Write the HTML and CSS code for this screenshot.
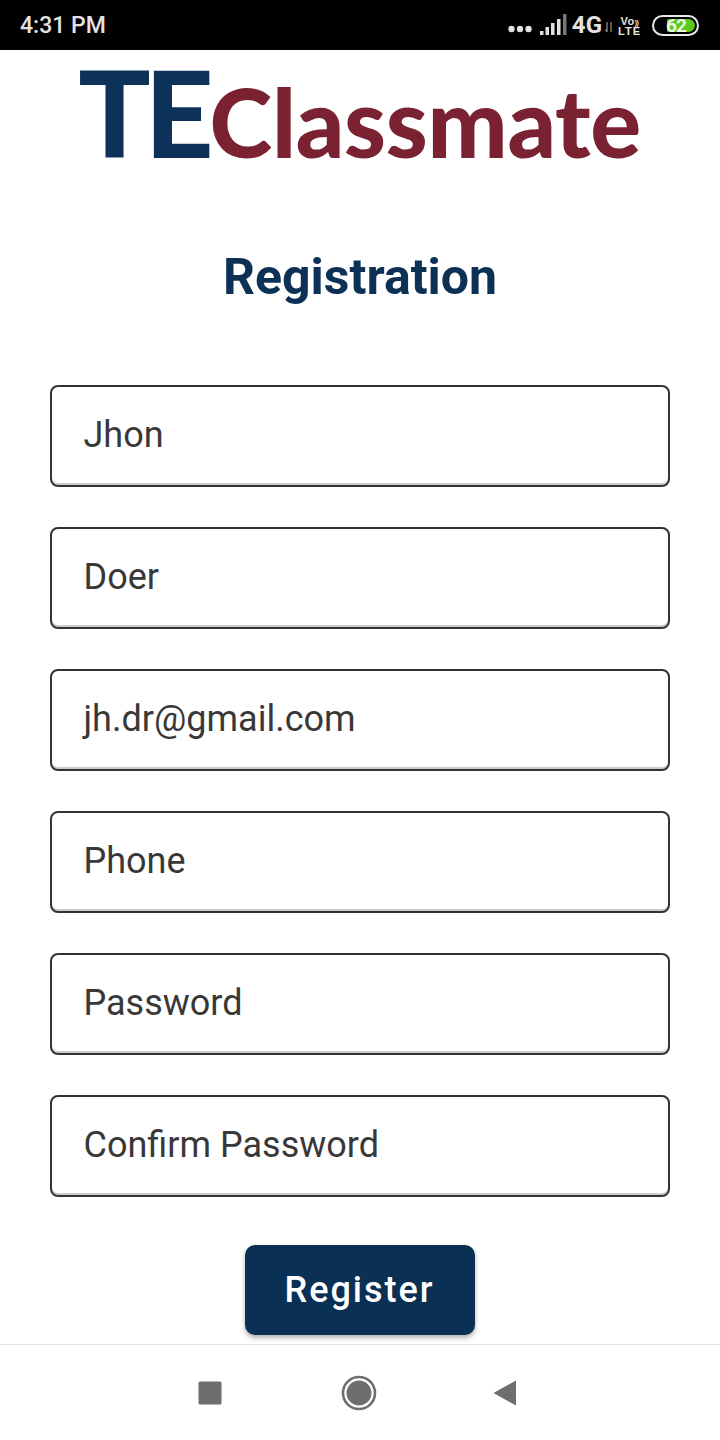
FILE: index.html
```html
<!DOCTYPE html>
<html lang="en">
<head>
<meta charset="utf-8">
<title>Registration</title>
<link rel="stylesheet" href="styles.css">
</head>
<body>
<div class="page">
  <header class="status">
    <span class="time">4:31 PM</span>
    <div class="status-icons">
      <svg class="dots" width="24" height="8" viewBox="0 0 24 8"><circle cx="3.5" cy="4" r="3.2"/><circle cx="12" cy="4" r="3.2"/><circle cx="20.5" cy="4" r="3.2"/></svg>
      <svg class="signal" width="27" height="22" viewBox="0 0 27 22"><path d="M0 17h3.5v4H0zM5.5 13H9v8H5.5zM11 9h3.5v12H11zM17 5h3.5v16H17z"/><rect x="23" y="0" width="3.5" height="21" fill="#777"/></svg>
      <span class="net">4G</span>
      <svg class="arrows" width="8" height="12" viewBox="0 0 8 12"><path d="M2 1v10M0.5 8.5 2 11M6 1v10" stroke="#888" stroke-width="1.3" fill="none"/></svg>
      <span class="volte"><span class="volte-top">Vo<small class="volte-waves">))</small></span><span class="volte-bottom">LTE</span></span>
      <span class="battery"><span class="battery-fill"></span><span class="battery-num">62</span></span>
    </div>
  </header>

  <main class="content">
    <div class="logo"><span class="logo-te">TE</span><span class="logo-cm">Classmate</span></div>
    <h1 class="title">Registration</h1>
    <form class="form">
      <div class="field">Jhon</div>
      <div class="field">Doer</div>
      <div class="field">jh.dr@gmail.com</div>
      <div class="field">Phone</div>
      <div class="field">Password</div>
      <div class="field">Confirm Password</div>
      <button type="button" class="submit">Register</button>
    </form>
  </main>

  <nav class="navbar">
    <svg width="24" height="24" viewBox="0 0 24 24"><rect width="23" height="23" x="0.5" y="0.5" rx="1.5" fill="#6e6e6e"/></svg>
    <svg width="36" height="36" viewBox="0 0 36 36"><circle cx="18" cy="18" r="16" fill="none" stroke="#6e6e6e" stroke-width="2.6"/><circle cx="18" cy="18" r="12.5" fill="#6e6e6e"/></svg>
    <svg width="24" height="26" viewBox="0 0 24 26"><path d="M23 0.5V25.5L0.5 13Z" fill="#6e6e6e"/></svg>
  </nav>
</div>
</body>
</html>
```
FILE: styles.css
```css
* { box-sizing: border-box; }
html, body { margin: 0; padding: 0; }
body { background: #fff; font-family: Roboto, "Liberation Sans", sans-serif; }
.page { width: 720px; height: 1440px; display: flex; flex-direction: column; overflow: hidden; }

.status { height: 50px; flex: none; background: #000; display: flex; align-items: center; justify-content: space-between; padding: 0 21px 0 20px; }
.time { color: #e2e2e2; font-size: 23px; font-weight: 500; line-height: 50px; margin-top: 1px; }
.status-icons { display: flex; align-items: center; }
.dots { fill: #e2e2e2; margin-top: 7px; margin-right: 8px; }
.signal { fill: #e2e2e2; margin-top: -1px; margin-right: 5px; }
.net { color: #e2e2e2; font-size: 24px; font-weight: 700; line-height: 1; margin-right: 3px; }
.arrows { margin-top: 3px; margin-right: 5px; }
.volte { width: 23px; display: flex; flex-direction: column; align-items: center; color: #e2e2e2; font-size: 11px; font-weight: 700; line-height: 10px; font-family: "Liberation Sans", sans-serif; margin-right: 11px; margin-top: 1px; }
.volte-top { display: block; height: 10px; letter-spacing: 0.5px; white-space: nowrap; }
.volte-waves { font-size: 7px; letter-spacing: -0.5px; }
.volte-bottom { display: block; height: 10px; letter-spacing: 1px; }
.battery { position: relative; width: 47px; height: 21px; border: 2px solid #e8e8e8; border-radius: 11px; display: block; overflow: hidden; }
.battery-fill { display: block; width: 28px; height: 13px; margin: 2px 0 0 13px; background: #5ac81e; border-radius: 2px 7px 7px 2px; }
.battery-num { position: absolute; left: 12px; top: -1px; color: #eef7e6; font-size: 19px; font-weight: 700; line-height: 19px; letter-spacing: -1px; }

.content { flex: 1; display: flex; flex-direction: column; align-items: center; }
.logo { height: 128px; width: 100%; display: flex; justify-content: center; align-items: baseline; font-family: Lato, sans-serif; font-weight: 900; line-height: 124px; margin-left: -1px; }
.logo-te { color: #0c3259; font-size: 120px; letter-spacing: -6px; margin-right: 2px; }
.logo-cm { color: #7a2232; font-size: 95px; font-weight: 900; letter-spacing: -0.3px; }

.title { margin: 67px 0 0; color: #0c3155; font-size: 50px; font-weight: 700; line-height: 64px; }

.form { margin-top: 76px; width: 620px; display: flex; flex-direction: column; align-items: center; gap: 40px; margin-left: -1px; }
.field { width: 100%; height: 102px; border: 2px solid #333; border-radius: 8px; box-shadow: inset 0 -2px 0 #ccc; padding: 0 32px 2px; display: flex; align-items: center; color: #383838; font-size: 36px; line-height: 1; }
.submit { width: 230px; height: 90px; margin-top: 8px; border: 0; border-radius: 10px; background: #0a3054; color: #fff; font-family: Roboto, sans-serif; font-size: 36px; font-weight: 500; letter-spacing: 2px; box-shadow: 0 3px 5px rgba(0,0,0,.3); }

.navbar { flex: none; height: 96px; border-top: 1px solid #e0e0e0; display: flex; align-items: center; padding-left: 198px; }
.navbar svg:nth-child(1) { margin-right: 119px; }
.navbar svg:nth-child(2) { margin-right: 116px; }
```
